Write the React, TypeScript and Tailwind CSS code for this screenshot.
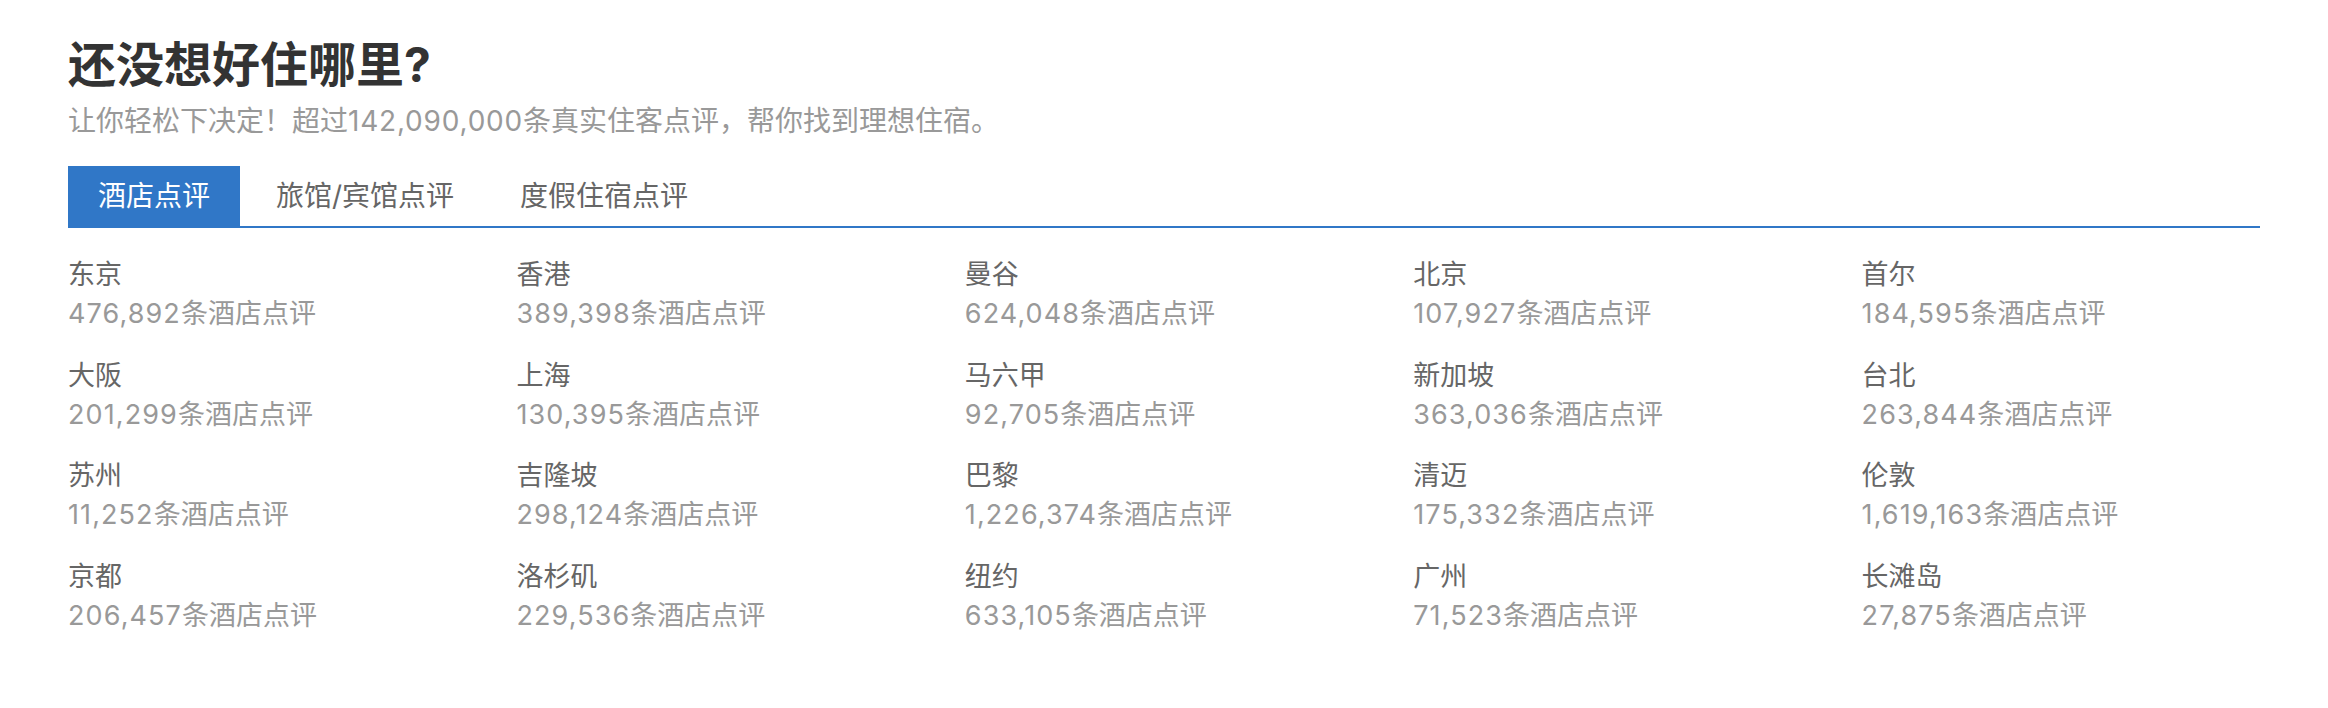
import React from "react";

const cities: [string, string][] = [
  ["东京", "476,892"],
  ["香港", "389,398"],
  ["曼谷", "624,048"],
  ["北京", "107,927"],
  ["首尔", "184,595"],
  ["大阪", "201,299"],
  ["上海", "130,395"],
  ["马六甲", "92,705"],
  ["新加坡", "363,036"],
  ["台北", "263,844"],
  ["苏州", "11,252"],
  ["吉隆坡", "298,124"],
  ["巴黎", "1,226,374"],
  ["清迈", "175,332"],
  ["伦敦", "1,619,163"],
  ["京都", "206,457"],
  ["洛杉矶", "229,536"],
  ["纽约", "633,105"],
  ["广州", "71,523"],
  ["长滩岛", "27,875"],
];

const tabs = ["酒店点评", "旅馆/宾馆点评", "度假住宿点评"];

export default function App() {
  return (
    <div
      className="min-h-[708px] w-full bg-white px-[68px] pt-[36px]"
      style={{ fontFamily: 'Inter, "Noto Sans CJK SC", sans-serif' }}
    >
      <h1 className="text-[48px] leading-[58px] font-bold text-[#333333]">还没想好住哪里?</h1>
      <p className="mt-[9px] text-[28px] leading-[36px] text-[#999999]">
        让你轻松下决定！超过<span className="tracking-[0.8px]">142,090,000</span>条真实住客点评，帮你找到理想住宿。
      </p>
      <div className="mt-[27px] flex gap-[6px] border-b-2 border-[#3077c7]">
        {tabs.map((t, i) => (
          <div
            key={t}
            className={
              i === 0
                ? "h-[60px] px-[30px] flex items-center text-[28px] bg-[#3077c7] text-white"
                : "h-[60px] px-[30px] flex items-center text-[28px] text-[#666666]"
            }
          >
            {t}
          </div>
        ))}
      </div>
      <div className="mt-[27px] grid grid-cols-5 gap-x-[50px] gap-y-[22.5px]">
        {cities.map(([name, count]) => (
          <div key={name} className="flex flex-col">
            <div className="text-[27px] leading-[39px] text-[#666666]">{name}</div>
            <div className="text-[27px] leading-[39px] text-[#999999]">
              <span className="tracking-[1.1px]">{count}</span>条酒店点评
            </div>
          </div>
        ))}
      </div>
    </div>
  );
}
